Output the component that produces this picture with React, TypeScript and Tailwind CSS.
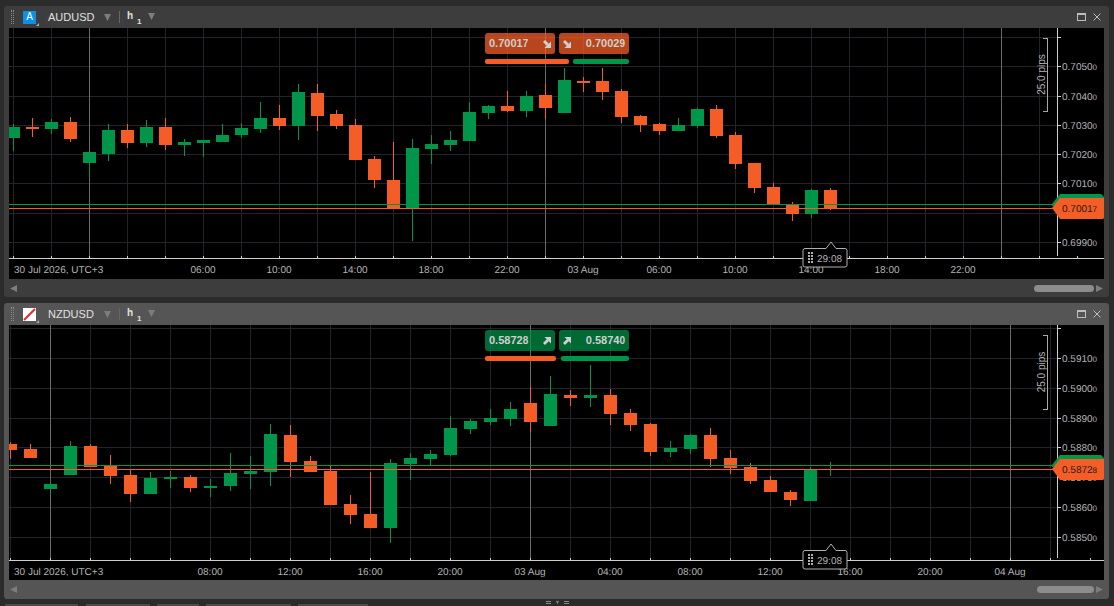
import React from 'react';

type Candle = [number, number, number, number]; // wick top, body top, body bottom, wick bottom

const GREEN = '#00964a';
const ORANGE = '#f55d27';
const FONT = '"Liberation Sans", Arial, sans-serif';

// 'g' or 'o', then y coordinates in page pixels
const audCandles: [string, ...Candle][] = [
  ['g', 124, 127, 138, 151], ['o', 118, 127, 129, 137], ['g', 119, 122, 129, 134], ['o', 117, 122, 139, 142],
  ['g', 152, 152, 163, 178], ['g', 124, 130, 154, 161], ['o', 124, 130, 143, 148], ['g', 120, 127, 143, 147],
  ['o', 118, 127, 145, 150], ['g', 139, 142, 145, 156], ['g', 140, 140, 143, 157], ['g', 124, 135, 142, 142],
  ['g', 123, 128, 135, 138], ['g', 102, 118, 129, 133], ['o', 105, 118, 126, 130], ['g', 84, 92, 126, 140],
  ['o', 84, 93, 116, 131], ['o', 110, 114, 126, 129], ['o', 119, 125, 160, 160], ['o', 156, 159, 180, 188],
  ['o', 142, 180, 208, 208], ['g', 139, 148, 208, 241], ['g', 135, 144, 149, 164], ['g', 131, 140, 145, 151],
  ['g', 102, 112, 141, 141], ['g', 105, 106, 113, 119], ['o', 91, 106, 111, 112], ['g', 91, 96, 111, 117],
  ['o', 84, 95, 108, 119], ['g', 68, 80, 113, 113], ['o', 77, 81, 83, 92], ['o', 68, 81, 92, 100],
  ['o', 89, 91, 117, 123], ['o', 115, 116, 125, 132], ['o', 123, 124, 131, 135], ['g', 118, 125, 131, 131],
  ['g', 108, 109, 126, 128], ['o', 105, 109, 136, 138], ['o', 132, 135, 164, 169], ['o', 163, 163, 188, 193],
  ['o', 183, 187, 204, 204], ['o', 202, 204, 214, 221], ['g', 189, 190, 214, 218], ['o', 188, 190, 209, 210],
];

const nzdCandles: [string, ...Candle][] = [
  ['o', 442, 444, 450, 459], ['o', 444, 449, 458, 458], ['g', 484, 484, 489, 489], ['g', 441, 446, 475, 475],
  ['o', 444, 446, 467, 467], ['o', 455, 466, 476, 484], ['o', 469, 475, 494, 502], ['g', 472, 478, 494, 494],
  ['g', 471, 477, 479, 488], ['o', 475, 477, 488, 492], ['g', 479, 486, 488, 497], ['g', 453, 473, 486, 491],
  ['g', 456, 471, 474, 489], ['g', 424, 434, 472, 486], ['o', 425, 435, 462, 477], ['o', 456, 461, 472, 472],
  ['o', 466, 471, 505, 505], ['o', 495, 504, 515, 524], ['o', 472, 514, 528, 528], ['g', 459, 463, 528, 543],
  ['g', 453, 458, 464, 480], ['g', 450, 454, 459, 465], ['g', 416, 428, 455, 456], ['g', 419, 421, 429, 434],
  ['g', 409, 418, 422, 425], ['g', 402, 409, 419, 426], ['o', 387, 403, 422, 432], ['g', 376, 394, 426, 426],
  ['o', 390, 395, 398, 406], ['g', 365, 395, 398, 407], ['o', 389, 395, 414, 425], ['o', 409, 413, 425, 431],
  ['o', 423, 424, 452, 456], ['g', 441, 448, 452, 457], ['g', 434, 435, 449, 454], ['o', 428, 435, 459, 467],
  ['o', 450, 458, 468, 474], ['o', 463, 467, 481, 484], ['o', 476, 480, 492, 492], ['o', 490, 492, 500, 506],
  ['g', 467, 470, 501, 501], ['g', 462, 469, 470, 476],
];

interface ChartConfig {
  top: number;
  height: number;
  firstX: number;
  step: number;
  candles: [string, ...Candle][];
  hGrid: number[];
  prices: [string, number][];
  sessions: number[];
  axisY: number;
  times: [string, number][];
  askY: number;
  bidY: number;
  tagTop: number;
  tagBottom: number;
  tagMain: string;
  tagSmall: string;
  rulerTop: number;
  rulerBottom: number;
}

const audChart: ChartConfig = {
  top: 28,
  height: 251,
  firstX: 13,
  step: 19,
  candles: audCandles,
  hGrid: [37, 66, 96, 125, 154, 183, 213, 242],
  prices: [['0.7050', 66], ['0.7040', 96], ['0.7030', 125], ['0.7020', 154], ['0.7010', 183], ['0.6990', 242]],
  sessions: [89, 545, 1001],
  axisY: 258,
  times: [['06:00', 203], ['10:00', 279], ['14:00', 355], ['18:00', 431], ['22:00', 507], ['03 Aug', 583], ['06:00', 659], ['10:00', 735], ['14:00', 811], ['18:00', 887], ['22:00', 963]],
  askY: 204,
  bidY: 208,
  tagTop: 198,
  tagBottom: 219,
  tagMain: '0.7001',
  tagSmall: '7',
  rulerTop: 38,
  rulerBottom: 111,
};

const nzdChart: ChartConfig = {
  top: 325,
  height: 255,
  firstX: 10,
  step: 20,
  candles: nzdCandles,
  hGrid: [328, 358, 388, 418, 447, 477, 507, 537],
  prices: [['0.5910', 358], ['0.5900', 388], ['0.5890', 418], ['0.5880', 447], ['0.5870', 477], ['0.5860', 507], ['0.5850', 537]],
  sessions: [50, 530, 1010],
  axisY: 560,
  times: [['08:00', 210], ['12:00', 290], ['16:00', 370], ['20:00', 450], ['03 Aug', 530], ['04:00', 610], ['08:00', 690], ['12:00', 770], ['16:00', 850], ['20:00', 930], ['04 Aug', 1010]],
  askY: 465,
  bidY: 469,
  tagTop: 459,
  tagBottom: 480,
  tagMain: '0.5872',
  tagSmall: '8',
  rulerTop: 335,
  rulerBottom: 409,
};

const ChartCanvas: React.FC<{ c: ChartConfig }> = ({ c }) => {
  const ticks: number[] = [];
  for (let x = c.firstX; x < 1104; x += c.step * 2) ticks.push(x);
  const axisEnd = c.axisY - 2;
  const timerY = c.axisY - 10;
  const mid = c.bidY;

  return (
    <svg
      className="block w-full h-full"
      viewBox={`9 ${c.top} 1095 ${c.height}`}
      shapeRendering="crispEdges"
      style={{ fontFamily: FONT }}
    >
      {/* grid */}
      {c.hGrid.map((y) => (
        <rect key={y} x={9} y={y} width={1048} height={1} fill="#23232a" />
      ))}
      {ticks.filter((x) => x < 1057).map((x) => (
        <rect key={x} x={x} y={c.top} width={1} height={c.axisY - c.top} fill={c.sessions.includes(x) ? '#6a6a6a' : '#23232a'} />
      ))}

      {/* candles */}
      {c.candles.map(([color, wickTop, bodyTop, bodyBottom, wickBottom], i) => {
        const x = c.firstX + i * c.step;
        const fill = color === 'g' ? GREEN : ORANGE;
        return (
          <g key={i} fill={fill}>
            <rect x={x} y={wickTop} width={1} height={wickBottom - wickTop} />
            <rect x={x - 6} y={bodyTop} width={13} height={bodyBottom - bodyTop} />
          </g>
        );
      })}

      {/* bid / ask lines */}
      <rect x={9} y={c.askY} width={1045} height={1} fill={GREEN} />
      <rect x={9} y={c.bidY} width={1045} height={1} fill={ORANGE} />

      {/* axes */}
      <rect x={1057} y={c.top} width={1} height={axisEnd - c.top} fill="#cfcfcf" />
      <rect x={9} y={c.axisY} width={1095} height={1} fill="#cfcfcf" />
      {ticks.map((x) => (
        <rect key={x} x={x} y={c.axisY - 2} width={1} height={2} fill="#cfcfcf" />
      ))}
      {c.hGrid.map((y) => (
        <rect key={y} x={1058} y={y} width={3} height={1} fill="#cfcfcf" />
      ))}

      {/* price labels */}
      <g fontSize={10} fill="#b4b4b4" textRendering="geometricPrecision">
        {c.prices.map(([p, y]) => (
          <text key={p} x={1062} y={y + 4}>
            {p}
            <tspan fontSize={8}>0</tspan>
          </text>
        ))}
        <text x={14} y={c.axisY + 15}>30 Jul 2026, UTC+3</text>
        {c.times.map(([t, x]) => (
          <text key={`${t}${x}`} x={x} y={c.axisY + 15} textAnchor="middle">{t}</text>
        ))}
      </g>

      {/* 25 pips ruler */}
      <path d={`M1043 ${c.rulerTop}.5H1047.5V${c.rulerBottom}H1043`} fill="none" stroke="#a8a8a8" />
      <text
        x={0}
        y={0}
        fontSize={10}
        fill="#b4b4b4"
        textAnchor="middle"
        transform={`translate(1045 ${(c.rulerTop + c.rulerBottom) / 2}) rotate(-90)`}
      >
        25.0 pips
      </text>

      {/* price tag */}
      <polygon
        points={`1052,${c.askY} 1060,${c.tagTop - 4} 1101,${c.tagTop - 4} 1104,${c.tagTop - 1} 1104,${c.tagTop + 3} 1052,${c.tagTop + 8}`}
        fill={GREEN}
        shapeRendering="auto"
      />
      <polygon
        points={`1052,${mid} 1060,${c.tagTop} 1104,${c.tagTop} 1104,${c.tagBottom - 1} 1103,${c.tagBottom} 1060,${c.tagBottom}`}
        fill={ORANGE}
        shapeRendering="auto"
      />
      <text x={1062} y={mid + 4} fontSize={10} fill="#1c1c1c" textRendering="geometricPrecision">
        {c.tagMain}
        <tspan fontSize={8}>{c.tagSmall}</tspan>
      </text>

      {/* candle countdown */}
      <path
        d={`M805 ${timerY}.5H826L831 ${timerY - 6}L836 ${timerY}.5H845a2 2 0 0 1 2 2V${timerY + 17}a2 2 0 0 1 -2 2H805a2 2 0 0 1 -2 -2V${timerY + 2}.5a2 2 0 0 1 2 -2Z`}
        fill="#000"
        stroke="#b0b0b0"
        shapeRendering="auto"
      />
      {[4, 7, 10, 13].map((d) => (
        <g key={d} fill="#b0b0b0">
          <rect x={808} y={timerY + d} width={2} height={2} />
          <rect x={811} y={timerY + d} width={2} height={2} />
        </g>
      ))}
      <text x={817} y={timerY + 14} fontSize={10} fill="#b4b4b4" textRendering="geometricPrecision">29:08</text>
    </svg>
  );
};

const Tri: React.FC<{ dir?: 'down' | 'left' | 'right'; className?: string }> = ({ dir = 'down', className }) => {
  const pts = dir === 'down' ? '0,0 7,0 3.5,7' : dir === 'left' ? '7,0 7,7 0,3.5' : '0,0 0,7 7,3.5';
  return (
    <svg width="7" height="7" viewBox="0 0 7 7" className={`shrink-0 ${className ?? ''}`}>
      <polygon points={pts} fill="#7d7d7d" />
    </svg>
  );
};

const TradeArrow: React.FC<{ up: boolean }> = ({ up }) => (
  <svg width="8" height="8" viewBox="0 0 8 8" className="shrink-0">
    <g transform={up ? 'translate(0 8) scale(1 -1)' : undefined} fill="#cfcfcf">
      <polygon points="8,1.5 8,8 1.5,8" />
      <polygon points="0,2 2,0 6,4 4,6" />
    </g>
  </svg>
);

const Quote: React.FC<{ main: string; small: string; up: boolean; side: 'sell' | 'buy'; bg: string }> = ({ main, small, up, side, bg }) => (
  <div className={`w-[70px] h-[21px] rounded-[3px] flex items-center justify-between px-[4px] text-[11px] font-bold text-[#cfcfcf] ${bg}`}>
    {side === 'sell' ? (
      <>
        <span>{main}<span className="text-[10px]">{small}</span></span>
        <TradeArrow up={up} />
      </>
    ) : (
      <>
        <TradeArrow up={up} />
        <span>{main}<span className="text-[10px]">{small}</span></span>
      </>
    )}
  </div>
);

interface PanelProps {
  chart: ChartConfig;
  symbol: string;
  icon: React.ReactNode;
  bg: string;
  footerH: string;
  chartH: string;
  thumb: string;
  quoteBg: string;
  up: boolean;
  sell: [string, string];
  buy: [string, string];
  sellBar: string;
  buyBar: string;
}

const ChartPanel: React.FC<PanelProps> = ({ chart, symbol, icon, bg, footerH, chartH, thumb, quoteBg, up, sell, buy, sellBar, buyBar }) => (
  <div className={`w-[1105px] ml-[4px] rounded-[3px] flex flex-col ${bg}`}>
    <div className="h-[22px] flex items-center text-[#e0e0e0]">
      <div className="ml-[7px] w-[3px] h-[14px] border-x border-dotted border-[#8a8a8a]" />
      <div className="ml-[9px] w-[13px] h-[13px] relative shrink-0">
        {icon}
        <div className="absolute left-[13px] top-[12px] w-0 h-0 border-l-[3px] border-l-transparent border-b-[3px] border-b-[#aaaaaa]" />
      </div>
      <div className="ml-[12px] w-[56px] text-[11px]">{symbol}</div>
      <Tri />
      <div className="ml-[8px] w-px h-[12px] bg-[#666666]" />
      <div className="ml-[7px] w-[10px] text-[10px] font-bold -mt-[4px]">h</div>
      <div className="w-[11px] text-[8px] font-bold mt-[9px]">1</div>
      <Tri className="-mt-[2px]" />
      <div className="ml-auto flex items-center gap-[7px] pr-[8px]">
        <svg width="9" height="8" viewBox="0 0 9 8">
          <rect x="0.5" y="0.5" width="8" height="7" fill="none" stroke="#bdbdbd" />
          <rect x="0" y="0" width="9" height="2" fill="#bdbdbd" />
        </svg>
        <svg width="8" height="8" viewBox="0 0 8 8">
          <path d="M0.5 0.5L7.5 7.5M7.5 0.5L0.5 7.5" stroke="#bdbdbd" />
        </svg>
      </div>
    </div>

    <div className={`relative mx-[5px] bg-black ${chartH}`}>
      <ChartCanvas c={chart} />
      <div className="absolute left-[476px] top-[5px] w-[144px]">
        <div className="flex justify-between">
          <Quote main={sell[0]} small={sell[1]} up={up} side="sell" bg={quoteBg} />
          <Quote main={buy[0]} small={buy[1]} up={up} side="buy" bg={quoteBg} />
        </div>
        <div className="flex justify-between mt-[5px]">
          <div className={`h-[5px] rounded-[2px] bg-[#f55d27] ${sellBar}`} />
          <div className={`h-[5px] rounded-[2px] bg-[#00964a] ${buyBar}`} />
        </div>
      </div>
    </div>

    <div className={`flex items-center pl-[6px] pr-[6px] ${footerH}`}>
      <Tri dir="left" />
      <div className={`ml-auto h-[7px] rounded-full bg-[#8c8c8c] ${thumb}`} />
      <Tri dir="right" className="ml-[2px]" />
    </div>
  </div>
);

export default function App() {
  return (
    <div className="relative w-[1114px] h-[606px] overflow-hidden bg-[#2b2b2b] pt-[6px] flex flex-col gap-[6px]" style={{ fontFamily: FONT }}>
      <ChartPanel
        chart={audChart}
        symbol="AUDUSD"
        icon={<div className="w-full h-full bg-[#0f8fe6] flex items-center justify-center text-[10px] leading-none text-white">A</div>}
        bg="bg-[#3d3d3d]"
        chartH="h-[251px]"
        footerH="h-[18px]"
        thumb="w-[60px]"
        quoteBg="bg-[#f55d27]/75"
        up={false}
        sell={['0.7001', '7']}
        buy={['0.7002', '9']}
        sellBar="w-[84px]"
        buyBar="w-[56px]"
      />
      <ChartPanel
        chart={nzdChart}
        symbol="NZDUSD"
        icon={
          <svg width="13" height="13" viewBox="0 0 13 13" className="block">
            <rect width="13" height="13" fill="#ffffff" />
            <path d="M1 12L12 1" stroke="#e8262a" strokeWidth="2" />
          </svg>
        }
        bg="bg-[#555555]"
        chartH="h-[255px]"
        footerH="h-[19px]"
        thumb="w-[57px]"
        quoteBg="bg-[#00964a]/70"
        up={true}
        sell={['0.5872', '8']}
        buy={['0.5874', '0']}
        sellBar="w-[71px]"
        buyBar="w-[68px]"
      />

      {/* panel splitter and the tab strip cut off by the window edge */}
      <div className="flex items-center justify-center gap-[3px] h-[5px] -mt-[5px] text-[#8a8a8a]">
        <div className="w-[5px] h-[3px] border-y border-[#8a8a8a]" />
        <Tri className="scale-50" />
        <div className="w-[5px] h-[3px] border-y border-[#8a8a8a]" />
      </div>
      <div className="absolute left-[5px] top-[604px] flex">
        <div className="w-[73px] h-[2px] bg-[#4a4a4a]" />
        <div className="ml-[8px] w-[64px] h-[2px] bg-[#4a4a4a]" />
        <div className="ml-[7px] w-[42px] h-[2px] bg-[#4a4a4a]" />
        <div className="ml-[7px] w-[85px] h-[2px] bg-[#4a4a4a]" />
        <div className="ml-[7px] w-[70px] h-[2px] bg-[#4a4a4a]" />
      </div>
    </div>
  );
}
